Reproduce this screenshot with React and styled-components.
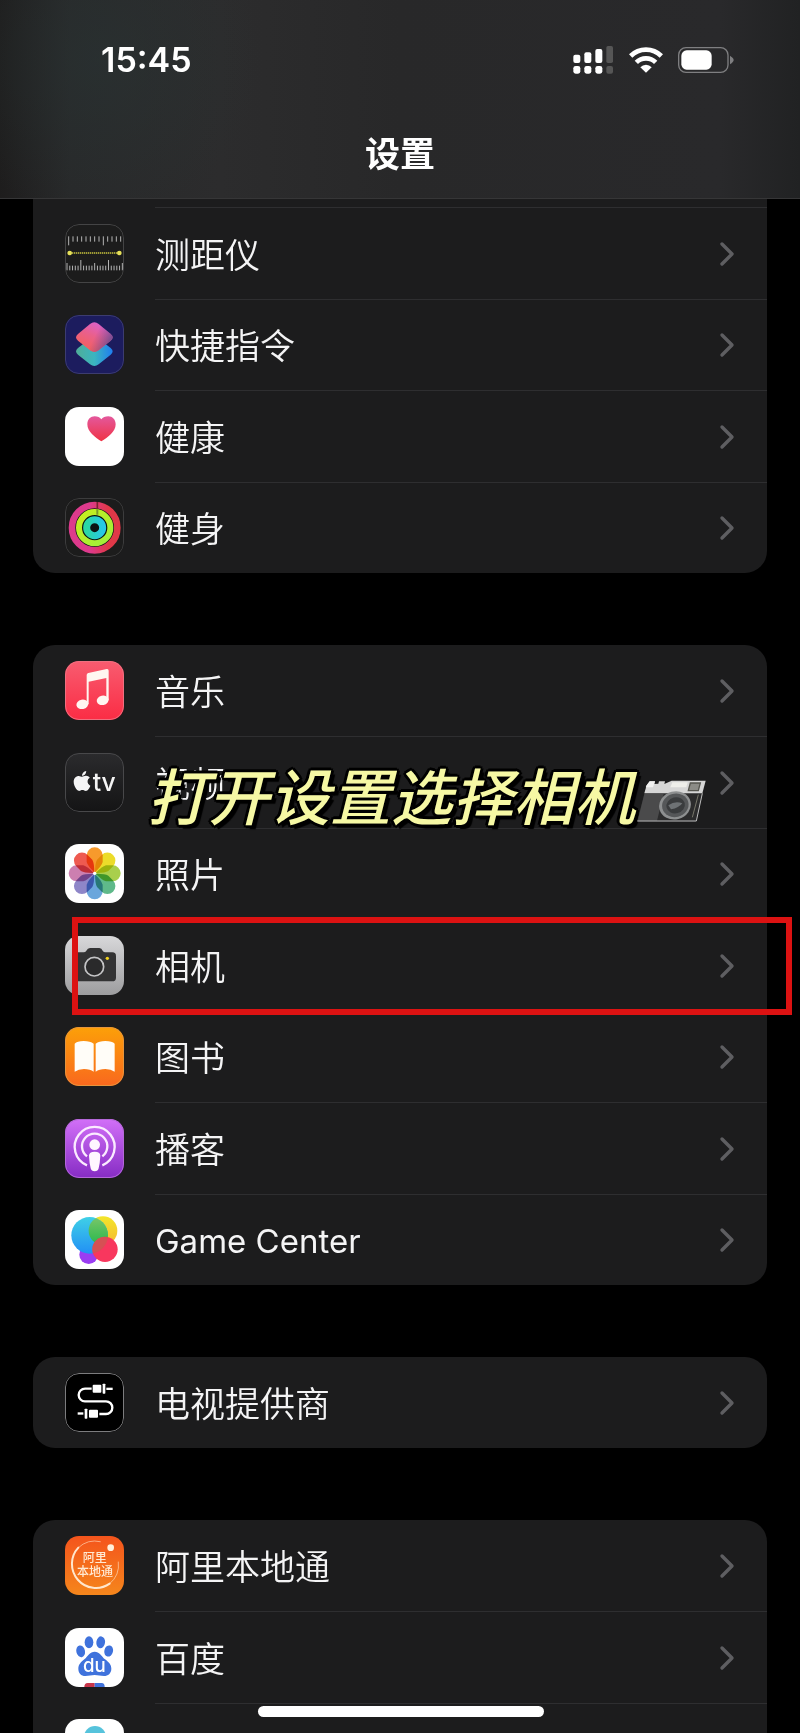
import React from "react"
import styled, { createGlobalStyle } from "styled-components"
import { FaApple } from "react-icons/fa"

const range = (n) => Array.from({ length: n }, (_, i) => i)

function MeasureIcon() {
  return (
    <Art viewBox="0 0 177 177">
      <g stroke="#b4b4b4" strokeWidth="3">
        {range(13).map((i) => (
          <path key={i} d={`M${11 + i * 13} 37V${i % 8 === 0 ? 64 : 53}`} />
        ))}
        {range(21).map((i) => {
          const top = i % 10 === 5 ? 108 : i % 5 === 0 ? 117 : 125
          return <path key={i} d={`M${6 + i * 8.3} 139V${top}`} />
        })}
      </g>
      <path
        d="M14 87H163"
        stroke="#c8c43c"
        strokeWidth="4"
        strokeDasharray="4 2"
      />
      <circle cx="14" cy="87" r="7" fill="#e6e05a" />
      <circle cx="163" cy="87" r="7" fill="#e6e05a" />
    </Art>
  )
}

function ShortcutsIcon() {
  return (
    <Art viewBox="0 0 177 177">
      <defs>
        <linearGradient id="scBottom" x1="0" y1="0" x2="1" y2="0">
          <stop offset="0" stopColor="#4fae98" />
          <stop offset="0.5" stopColor="#3bb5c0" />
          <stop offset="1" stopColor="#1f7df0" />
        </linearGradient>
        <linearGradient id="scTop" x1="0.2" y1="0.9" x2="0.7" y2="0">
          <stop offset="0" stopColor="#f4605a" />
          <stop offset="0.5" stopColor="#ea608a" />
          <stop offset="1" stopColor="#da61d2" />
        </linearGradient>
        <linearGradient id="scFade" x1="0" y1="0" x2="1" y2="0.4">
          <stop offset="0.6" stopColor="#8a4a8e" stopOpacity="0" />
          <stop offset="1" stopColor="#6a4a8e" stopOpacity="0.8" />
        </linearGradient>
      </defs>
      <path
        d="M88 66Q95 66 101 71L137 99Q149 109 137 119L101 148Q88 158 75 148L39 119Q27 109 39 99L75 71Q81 66 88 66Z"
        fill="url(#scBottom)"
      />
      <path
        d="M88 22Q95 22 101 27L137 57Q149 67 137 77L101 106Q88 116 75 106L39 77Q27 67 39 57L75 27Q81 22 88 22Z"
        fill="url(#scTop)"
      />
      <path
        d="M88 22Q95 22 101 27L137 57Q149 67 137 77L101 106Q88 116 75 106L39 77Q27 67 39 57L75 27Q81 22 88 22Z"
        fill="url(#scFade)"
      />
    </Art>
  )
}

function HealthIcon() {
  return (
    <Art viewBox="0 0 177 177">
      <defs>
        <linearGradient id="heart" x1="0" y1="0" x2="0" y2="1">
          <stop offset="0" stopColor="#e4589c" />
          <stop offset="1" stopColor="#f03345" />
        </linearGradient>
      </defs>
      <path
        d="M109 103C90 91 67 74 67 52C67 36 77 28 89 28C98 28 105 32 109 37C113 32 121 28 130 28C142 28 152 37 152 52C152 74 129 91 109 103Z"
        fill="url(#heart)"
      />
    </Art>
  )
}

function FitnessIcon() {
  return (
    <Art viewBox="0 0 177 177">
      <defs>
        <linearGradient id="move" x1="0" y1="0" x2="1" y2="0">
          <stop offset="0.4" stopColor="#dd3a8c" />
          <stop offset="0.8" stopColor="#e03848" />
        </linearGradient>
        <linearGradient id="exercise" x1="0" y1="0" x2="1" y2="1">
          <stop offset="0" stopColor="#c8ee1e" />
          <stop offset="1" stopColor="#9ef03c" />
        </linearGradient>
        <linearGradient id="stand" x1="0" y1="0" x2="1" y2="0">
          <stop offset="0" stopColor="#2ad8a4" />
          <stop offset="1" stopColor="#28c8e8" />
        </linearGradient>
      </defs>
      <circle cx="89" cy="89" r="78" fill="#0c1414" />
      <g fill="none">
        <circle cx="89" cy="89" r="68" stroke="url(#move)" strokeWidth="20" />
        <path d="M97 12V32" stroke="#7c2030" strokeWidth="5" />
        <circle cx="89" cy="89" r="47" stroke="url(#exercise)" strokeWidth="18" />
        <path d="M97 34V50" stroke="#7b9a28" strokeWidth="6" />
        <circle cx="89" cy="89" r="24" stroke="url(#stand)" strokeWidth="21" />
      </g>
    </Art>
  )
}

function MusicIcon() {
  return (
    <Art viewBox="0 0 177 177" fill="#fff6f0">
      <path d="M65 42Q65 37 70 36L125 24Q131 23 131 29V118H124V51L71 62V130H65Z" />
      <ellipse cx="52" cy="130" rx="18" ry="14" transform="rotate(-12 52 130)" />
      <ellipse cx="113" cy="118" rx="18" ry="14" transform="rotate(-12 113 118)" />
    </Art>
  )
}

function TvIcon() {
  return (
    <Art viewBox="0 0 177 177" fill="#f4f4f4">
      <FaApple x="17" y="50" size="68" />
      <TvMark x="83" y="114">
        tv
      </TvMark>
    </Art>
  )
}

const petals = [
  "#f79a2c",
  "#ecdc2a",
  "#a9cf4c",
  "#5fb98a",
  "#6aa6dc",
  "#8e86c8",
  "#cc7fb0",
  "#ee5a50",
]

function PhotosIcon() {
  return (
    <Art viewBox="0 0 177 177">
      {petals.map((color, i) => (
        <Petal
          key={color}
          d="M65 34A24 24 0 0 1 113 34V54Q110 66 89 86Q68 66 65 54Z"
          fill={color}
          transform={`rotate(${i * 45} 89 88)`}
        />
      ))}
      <circle cx="89" cy="88" r="5" fill="#fff" />
    </Art>
  )
}

function CameraIcon() {
  return (
    <Art viewBox="0 0 177 177">
      <path
        d="M38 49H56Q61 49 64 44Q68 36 75 36H103Q110 36 113 44Q116 49 121 49H142Q153 49 153 60V125Q153 136 142 136H36Q25 136 25 125V60Q25 49 38 49Z"
        fill="#333334"
      />
      <circle
        cx="88"
        cy="92"
        r="28"
        fill="#2a2a2b"
        stroke="#c4c4c6"
        strokeWidth="5"
      />
      <circle cx="127" cy="67" r="5" fill="#f2d21c" />
    </Art>
  )
}

function BooksIcon() {
  return (
    <Art viewBox="0 0 177 177" fill="#fffdf8">
      <path d="M29 50Q36 42 56 42Q76 42 86 50V134Q76 126 57 126Q40 126 29 134Z" />
      <path d="M149 50Q142 42 121 42Q102 42 92 50V134Q102 126 121 126Q138 126 149 134Z" />
    </Art>
  )
}

function PodcastsIcon() {
  return (
    <Art viewBox="0 0 177 177">
      <g fill="none" stroke="#fbeaff" strokeWidth="7">
        <path d="M66 139A60 60 0 1 1 112 139" />
        <path d="M66 112A38 38 0 1 1 112 112" />
      </g>
      <g fill="#fff6ff">
        <circle cx="89" cy="77" r="16" />
        <path d="M72 110Q72 98 89 98Q106 98 106 110Q105 132 101 148Q99 157 89 157Q79 157 77 148Q73 132 72 110Z" />
      </g>
    </Art>
  )
}

function GameCenterIcon() {
  return (
    <Art viewBox="0 0 177 177">
      <defs>
        <linearGradient id="gcBlue" x1="0" y1="0" x2="0" y2="1">
          <stop offset="0" stopColor="#3fd0e6" />
          <stop offset="1" stopColor="#2290f5" />
        </linearGradient>
        <linearGradient id="gcGreen" x1="0" y1="0" x2="0" y2="1">
          <stop offset="0" stopColor="#7cc66a" />
          <stop offset="1" stopColor="#28b84c" />
        </linearGradient>
        <linearGradient id="gcYellow" x1="0" y1="0" x2="0" y2="1">
          <stop offset="0" stopColor="#f3e62a" />
          <stop offset="1" stopColor="#f5b832" />
        </linearGradient>
        <clipPath id="gcClip">
          <circle cx="74" cy="76" r="55" />
        </clipPath>
      </defs>
      <circle cx="71" cy="134" r="28" fill="#9a3df2" />
      <circle cx="114" cy="62" r="43" fill="url(#gcYellow)" />
      <circle cx="74" cy="76" r="55" fill="url(#gcBlue)" />
      <circle
        cx="114"
        cy="62"
        r="43"
        fill="url(#gcGreen)"
        clipPath="url(#gcClip)"
      />
      <circle cx="120" cy="118" r="38" fill="#f8375e" />
      <circle
        cx="120"
        cy="118"
        r="38"
        fill="#c0604e"
        opacity="0.6"
        clipPath="url(#gcClip)"
      />
    </Art>
  )
}

function TvProviderIcon() {
  return (
    <Art viewBox="0 0 177 177" fill="#fff">
      <path
        d="M80 47H60A19 19 0 0 0 60 85H123A19 19 0 0 1 123 123H103"
        fill="none"
        stroke="#fff"
        strokeWidth="7"
      />
      <rect x="83" y="35" width="26" height="24" rx="3" />
      <rect x="113" y="32" width="8" height="30" rx="2" />
      <rect x="124" y="44" width="19" height="7" />
      <rect x="38" y="118" width="17" height="7" />
      <rect x="59" y="107" width="8" height="30" rx="2" />
      <rect x="72" y="110" width="27" height="24" rx="3" />
    </Art>
  )
}

function AliIcon() {
  return (
    <Art viewBox="0 0 177 177">
      <g fill="none" stroke="#ffe6cc" strokeLinecap="round">
        <path d="M106 17A72 72 0 0 0 40 35" strokeWidth="3" opacity="0.6" />
        <path d="M40 35A72 72 0 0 0 134 143" strokeWidth="6" />
        <path d="M134 143A72 72 0 0 0 160 78" strokeWidth="3" opacity="0.6" />
      </g>
      <circle cx="137" cy="35" r="10" fill="#fff0dc" />
      <AliMark x="89" y="78">
        阿里
      </AliMark>
      <AliMark x="90" y="120">
        本地通
      </AliMark>
    </Art>
  )
}

function BaiduIcon() {
  return (
    <Art viewBox="0 0 177 177" fill="#3f72dc">
      <ellipse cx="47" cy="70" rx="13" ry="18" transform="rotate(-12 47 70)" />
      <ellipse cx="72" cy="43" rx="13" ry="18" />
      <ellipse cx="107" cy="43" rx="13" ry="18" transform="rotate(8 107 43)" />
      <ellipse cx="131" cy="69" rx="13" ry="17" transform="rotate(14 131 69)" />
      <path d="M89 71C103 71 109 84 120 94C132 103 139 110 139 122C139 136 129 144 117 144C106 144 99 141 89 141C79 141 72 144 61 144C48 144 40 135 40 122C40 110 48 102 58 94C69 84 75 71 89 71Z" />
      <BaiduMark x="88" y="132">
        du
      </BaiduMark>
      <path d="M58 177Q58 165 68 165H89V177Z" fill="#c8354a" />
      <path d="M89 165H110Q119 165 119 177H89Z" />
    </Art>
  )
}

function CloudIcon() {
  return (
    <Art viewBox="0 0 177 177">
      <circle cx="90" cy="54" r="33" fill="#56c3dc" />
      <circle cx="92" cy="56" r="14" fill="#e4f7fb" />
    </Art>
  )
}

function SignalIcon() {
  return (
    <svg width="41" height="28" viewBox="0 0 123 84" fill="#fff" aria-hidden="true">
      <rect x="1" y="26" width="21" height="25" rx="6" />
      <rect x="34" y="19" width="21" height="32" rx="6" />
      <rect x="67" y="9" width="21" height="42" rx="6" />
      <rect x="1" y="60" width="21" height="23" rx="7" />
      <rect x="34" y="60" width="21" height="23" rx="7" />
      <rect x="67" y="60" width="21" height="23" rx="7" />
      <g fill="#565656">
        <rect x="100" y="0" width="20" height="51" rx="5" />
        <rect x="100" y="60" width="20" height="23" rx="6" />
      </g>
    </svg>
  )
}

function WifiIcon() {
  return (
    <svg width="34" height="26" viewBox="0 0 102 78" aria-hidden="true">
      <g fill="none" stroke="#fff" strokeWidth="14">
        <path d="M5 27Q24 8 51 8Q78 8 97 27" />
        <path d="M22 46Q34 34 51 34Q68 34 80 46" />
      </g>
      <path d="M51 77L34 61Q41 53 51 53Q61 53 68 61Z" fill="#fff" />
    </svg>
  )
}

function BatteryIcon() {
  return (
    <svg width="56" height="26" viewBox="0 0 168 78" aria-hidden="true">
      <rect
        x="2"
        y="2"
        width="148"
        height="74"
        rx="22"
        fill="none"
        stroke="#7f7f81"
        strokeWidth="4"
      />
      <rect x="10" y="10" width="91" height="58" rx="16" fill="#fff" />
      <path d="M156 26Q167 33 167 39Q167 45 156 52Z" fill="#7f7f81" />
    </svg>
  )
}

function Chevron() {
  return (
    <svg width="16" height="26" viewBox="0 0 16 26" aria-hidden="true">
      <path
        d="M3 3L13 13L3 23"
        fill="none"
        stroke="#5e5e61"
        strokeWidth="3.4"
        strokeLinecap="round"
        strokeLinejoin="round"
      />
    </svg>
  )
}

function VintageCamera() {
  return (
    <svg width="69" height="42" viewBox="0 0 207 126" aria-hidden="true">
      <path d="M29 16L206 3L178 124H0Z" fill="#2b2b2c" />
      <path d="M29 16L38 4H54L52 12L64 11L66 4H84L82 12L104 2H206L196 40H22Z" fill="#d6d6d6" />
      <path d="M29 16L38 4H54L48 22H26Z" fill="#f1f1f1" />
      <path d="M106 7H152L148 22H100Z" fill="#eeeeea" />
      <path d="M22 42H80L60 122H2Z" fill="#4a4a4b" />
      <path d="M196 40L178 123H1" fill="none" stroke="#bdbdbd" strokeWidth="3" />
      <path d="M184 44L166 112" stroke="#77766a" strokeWidth="3" />
      <path d="M160 9H190L184 32H154Z" fill="#8b8b86" stroke="#55554f" strokeWidth="4" />
      <ellipse cx="114" cy="76" rx="48" ry="42" fill="#8d8f90" transform="rotate(-14 114 76)" />
      <ellipse cx="115" cy="76" rx="40" ry="35" fill="#555759" transform="rotate(-14 115 76)" />
      <ellipse cx="116" cy="76" rx="28" ry="24" fill="#3a3c3e" transform="rotate(-14 116 76)" />
      <path d="M94 76Q114 62 136 70Q126 84 102 88Z" fill="#6e7275" />
    </svg>
  )
}

const plain = "#1c1c1c"

const groups = [
  {
    id: "apps",
    continued: true,
    rows: [
      { label: "测距仪", icon: MeasureIcon, bg: plain, edge: "#444445" },
      { label: "快捷指令", icon: ShortcutsIcon, bg: "#1c1c5e", edge: "#3c3c70" },
      { label: "健康", icon: HealthIcon, bg: "#ffffff" },
      { label: "健身", icon: FitnessIcon, bg: plain, edge: "#3c3c3d" },
    ],
  },
  {
    id: "media",
    rows: [
      {
        label: "音乐",
        icon: MusicIcon,
        bg: "linear-gradient(#f85c70, #fb2c44)",
        edge: "#ee7080",
      },
      {
        label: "视频",
        icon: TvIcon,
        bg: "linear-gradient(#2b2b2d, #141415)",
        edge: "#48484a",
        caption: "打开设置选择相机",
      },
      { label: "照片", icon: PhotosIcon, bg: "#ffffff" },
      {
        label: "相机",
        icon: CameraIcon,
        bg: "linear-gradient(#d8d8da, #9d9d9f)",
        marked: true,
      },
      {
        label: "图书",
        icon: BooksIcon,
        bg: "linear-gradient(#fca008, #f9681e)",
        edge: "#e5943c",
      },
      {
        label: "播客",
        icon: PodcastsIcon,
        bg: "linear-gradient(#d270f8, #862cc4)",
        edge: "#b468d8",
      },
      {
        label: "Game Center",
        latin: true,
        icon: GameCenterIcon,
        bg: "#ffffff",
      },
    ],
  },
  {
    id: "provider",
    rows: [
      { label: "电视提供商", icon: TvProviderIcon, bg: "#000000", edge: "#7c7c7e" },
    ],
  },
  {
    id: "third-party",
    rows: [
      {
        label: "阿里本地通",
        icon: AliIcon,
        bg: "linear-gradient(#f4541c, #f5861c)",
      },
      { label: "百度", icon: BaiduIcon, bg: "#ffffff" },
      { label: "", icon: CloudIcon, bg: "#ffffff" },
    ],
  },
]

function SettingsRow({ label, latin, icon: Icon, bg, edge, caption, marked }) {
  return (
    <Item>
      <RowLink href="#" aria-label={label || "App"}>
        <Tile $bg={bg} $edge={edge}>
          <Icon />
        </Tile>
        <Body>
          <Label $latin={latin}>{label}</Label>
          <Chevron />
        </Body>
      </RowLink>
      {caption && (
        <Caption>
          <CaptionText>{caption}</CaptionText>
          <VintageCamera />
        </Caption>
      )}
      {marked && <Marker />}
    </Item>
  )
}

function App() {
  return (
    <Screen>
      <GlobalStyle />
      <Header>
        <StatusBar>
          <Time>15:45</Time>
          <StatusIcons>
            <SignalIcon />
            <WifiIcon />
            <BatteryIcon />
          </StatusIcons>
        </StatusBar>
        <Title>设置</Title>
      </Header>
      <Content>
        {groups.map((group) => (
          <Group key={group.id} $continued={group.continued}>
            {group.continued && <Sliver aria-hidden="true" />}
            {group.rows.map((row) => (
              <SettingsRow key={row.label} {...row} />
            ))}
          </Group>
        ))}
      </Content>
      <HomeIndicator />
    </Screen>
  )
}

export default App

const GlobalStyle = createGlobalStyle`
  * {
    box-sizing: border-box;
  }

  body {
    margin: 0;
    background: #000000;
    color: #f4f4f5;
    font-family: Inter, "Noto Sans CJK SC", sans-serif;
  }
`

const Screen = styled.div`
  position: relative;
  display: flex;
  flex-direction: column;
  height: 100vh;
  overflow: hidden;
`

const Header = styled.header`
  flex: none;
  display: flex;
  flex-direction: column;
  padding-bottom: 20px;
  border-bottom: 1px solid #363637;
  background:
    radial-gradient(circle at 100px 60px, #29343488 0, #29343400 160px),
    linear-gradient(90deg, #1e1d1d 0, #28292a 70px, #2c2c2d 220px, #282829 50%, #29292b 90%, #212223 100%);
`

const StatusBar = styled.div`
  display: flex;
  align-items: center;
  justify-content: space-between;
  height: 120px;
  padding: 0 66px 0 101px;
`

const Time = styled.time`
  font-size: 34px;
  font-weight: 600;
  line-height: 40px;
  color: #ffffff;
`

const StatusIcons = styled.div`
  display: flex;
  align-items: center;
  gap: 15px;
`

const Title = styled.h1`
  margin: 10px 0 0;
  font-size: 35px;
  font-weight: 600;
  line-height: 48px;
  text-align: center;
  color: #ffffff;
`

const Content = styled.main`
  flex: 1;
  min-height: 0;
  display: flex;
  flex-direction: column;
  gap: 72px;
  padding: 0 33px;
  overflow: hidden;
`

const Group = styled.ul`
  flex: none;
  margin: 0;
  padding: 0;
  list-style: none;
  background: #1c1c1d;
  border-radius: ${(props) => (props.$continued ? "0 0 22px 22px" : "22px")};
`

const Body = styled.div`
  flex: 1;
  display: flex;
  align-items: center;
  justify-content: space-between;
  padding-right: 32px;
  border-top: 1px solid #2e2e30;
`

const Item = styled.li`
  position: relative;
  height: 91px;

  &:nth-child(even) {
    height: 92px;
  }

  &:first-child ${Body} {
    border-top-color: transparent;
  }
`

const Sliver = styled.li`
  height: 8px;
`

const RowLink = styled.a`
  display: flex;
  height: 100%;
  padding-left: 32px;
  gap: 31px;
  color: inherit;
  text-decoration: none;
`

const Tile = styled.span`
  align-self: center;
  position: relative;
  flex: none;
  width: 59px;
  height: 59px;
  overflow: hidden;
  border-radius: 14px;
  background: ${(props) => props.$bg};

  &::after {
    content: "";
    position: absolute;
    inset: 0;
    border: 1px solid ${(props) => props.$edge || "transparent"};
    border-radius: 14px;
  }
`

const Art = styled.svg`
  display: block;
  width: 100%;
  height: 100%;
`

const Label = styled.span`
  padding-top: 2px;
  font-size: ${(props) => (props.$latin ? "33px" : "35px")};
  font-weight: ${(props) => (props.$latin ? 400 : 350)};
  line-height: 48px;
  white-space: nowrap;
`

const Caption = styled.div`
  position: absolute;
  z-index: 1;
  top: 18px;
  left: 114px;
  display: flex;
  align-items: flex-end;
  gap: 2px;

  svg {
    margin-bottom: 20px;
  }
`

const CaptionText = styled.strong`
  font-size: 61px;
  font-style: italic;
  font-weight: 500;
  line-height: 88px;
  white-space: nowrap;
  color: #f6f8a4;
  text-shadow:
    -3px 0 0 #000,
    3px 0 0 #000,
    0 -3px 0 #000,
    0 3px 0 #000,
    -2px -2px 0 #000,
    2px -2px 0 #000,
    -2px 2px 0 #000,
    4px 4px 1px #000;
`

const Marker = styled.div`
  position: absolute;
  z-index: 1;
  inset: -2px -25px -4px 39px;
  border: 6px solid #dc1212;
  pointer-events: none;
`

const HomeIndicator = styled.div`
  position: absolute;
  bottom: 16px;
  left: 50%;
  width: 286px;
  height: 11px;
  margin-left: -142px;
  border-radius: 6px;
  background: #ffffff;
`

const Petal = styled.path`
  mix-blend-mode: multiply;
`

const TvMark = styled.text`
  font-family: Inter, sans-serif;
  font-size: 74px;
  font-weight: 500;
`

const AliMark = styled.text`
  fill: #ffe9d2;
  font-family: "Noto Sans CJK SC", sans-serif;
  font-size: 36px;
  font-weight: 500;
  text-anchor: middle;
`

const BaiduMark = styled.text`
  fill: #ffffff;
  font-family: Inter, sans-serif;
  font-size: 56px;
  font-weight: 500;
  text-anchor: middle;
`
